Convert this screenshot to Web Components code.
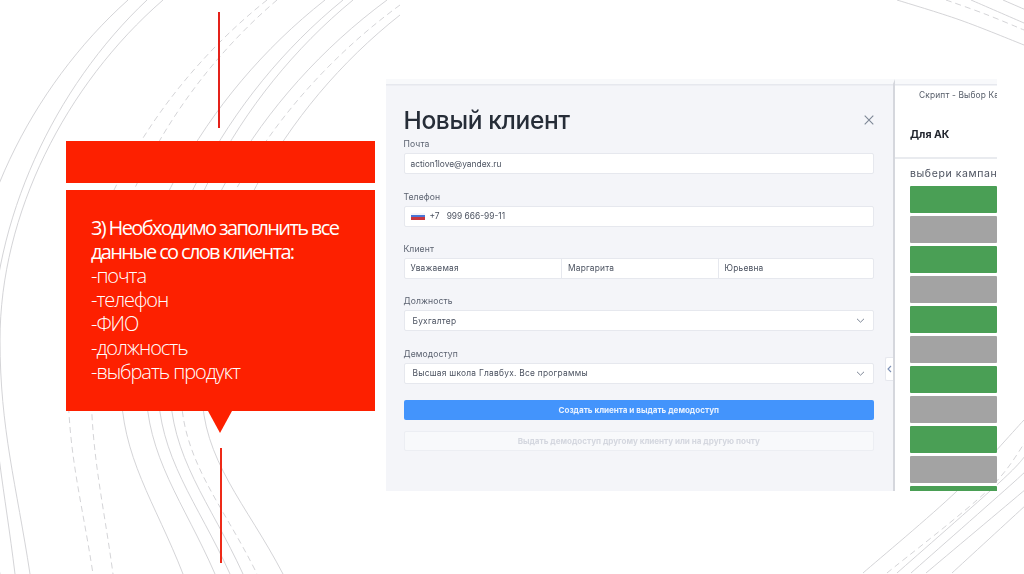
<!DOCTYPE html>
<html lang="ru"><head><meta charset="utf-8"><title>Новый клиент</title>
<style>
html,body{margin:0;padding:0;background:#fff}
</style></head><body>
<slide-page>
  <red-callout slot="left">
    <span class="h">3) Необходимо заполнить все</span>
    <span class="h">данные со слов клиента:</span>
    <span>-почта</span><span>-телефон</span><span>-ФИО</span><span>-должность</span><span>-выбрать продукт</span>
  </red-callout>
  <app-shot slot="right">
    <client-modal>
      <form-field label="Почта"><text-box>action1love@yandex.ru</text-box></form-field>
      <form-field label="Телефон"><text-box flag>+7&nbsp;&nbsp;&nbsp;999 666-99-11</text-box></form-field>
      <form-field label="Клиент"><name-box><span>Уважаемая</span><span>Маргарита</span><span>Юрьевна</span></name-box></form-field>
      <form-field label="Должность"><text-box select>Бухгалтер</text-box></form-field>
      <form-field label="Демодоступ"><text-box select>Высшая школа Главбух. Все программы</text-box></form-field>
    </client-modal>
    <script-panel></script-panel>
  </app-shot>
</slide-page>
<script>
function smooth(p){
  let d=`M${p[0][0]} ${p[0][1]}`;
  for(let i=0;i<p.length-1;i++){
    const a=p[Math.max(i-1,0)],b=p[i],c=p[i+1],e=p[Math.min(i+2,p.length-1)];
    d+=` C${(b[0]+(c[0]-a[0])/6).toFixed(1)} ${(b[1]+(c[1]-a[1])/6).toFixed(1)} ${(c[0]-(e[0]-b[0])/6).toFixed(1)} ${(c[1]-(e[1]-b[1])/6).toFixed(1)} ${c[0]} ${c[1]}`;
  }
  return d;
}
/* a left-hand arc: top end T, leftmost point L with a vertical tangent, bottom end B */
function arc(T,L,B){
  const dx=L[0]-T[0],dy=L[1]-T[1],by=B[1]-L[1],bx=B[0]-L[0];
  const n=v=>v.toFixed(1);
  return `M${T[0]} ${T[1]} C${n(T[0]+.6*dx)} ${n(T[1]+.25*dy)} ${L[0]} ${n(L[1]-.37*dy)} ${L[0]} ${L[1]} C${L[0]} ${n(L[1]+.38*by)} ${n(B[0]-.45*bx)} ${n(B[1]-.38*by)} ${B[0]} ${B[1]}`;
}
const LEFT_SOLID=[
 [[128,0],[-35,350],[0,574]],
 [[147,0],[-8,350],[15,574]],
 [[163,0],[0,340],[30,574]],
 [[325,0],[121,385],[183,574]],
 [[343,0],[146,385],[215,574]],
 [[353,0],[158,385],[230,574]],
 [[387,0],[170,385],[243,574]],
 [[400,15],[202,390],[283,574]]
];
const LEFT_DASH=[
 [[267,0],[68,380],[93,574]],
 [[277,0],[91,380],[113,574]],
 [[400,5],[181,390],[257,574]]
];
const RIGHT_SOLID=[
 [[897,0],[960,20],[1024,45]],
 [[971,0],[1024,23]],
 [[1003,0],[1026,10]],
 [[863,573],[957,491],[1024,420]],
 [[897,573],[1000,482],[1026,455]],
 [[911,573],[1014,482],[1026,470]],
 [[926,573],[1026,489]],
 [[952,573],[1026,505]]
];
const RIGHT_DASH=[
 [[946,0],[985,14],[1024,30]],
 [[887,573],[987,491],[1026,441]]
];
class Base extends HTMLElement{
  constructor(){super();this.attachShadow({mode:'open'}).innerHTML=this.tpl();}
}
customElements.define('slide-arcs',class extends Base{
  tpl(){return `<style>:host{display:block;position:absolute;inset:0}svg{display:block}path{fill:none;stroke:#cfcfd2;stroke-width:.9}</style>
  <svg width="1024" height="574" viewBox="0 0 1024 574">
  ${LEFT_SOLID.map(a=>`<path d="${arc(...a)}"/>`).join('')}
  ${LEFT_DASH.map(a=>`<path stroke-dasharray="6 4" d="${arc(...a)}"/>`).join('')}
  ${RIGHT_SOLID.map(p=>`<path d="${smooth(p)}"/>`).join('')}
  ${RIGHT_DASH.map(p=>`<path stroke-dasharray="6 4" d="${smooth(p)}"/>`).join('')}
  </svg>`}
});
customElements.define('slide-page',class extends Base{
  tpl(){return `<style>:host{display:flex;position:relative;width:1024px;height:574px;overflow:hidden;background:#fff}
  .col{position:relative;display:flex;gap:10.5px;padding-left:65.5px}</style>
  <slide-arcs></slide-arcs><div class="col"><slot name="left"></slot><slot name="right"></slot></div>`}
});
customElements.define('red-callout',class extends Base{
  tpl(){return `<style>
  :host{display:flex;flex-direction:column;width:310px;padding-top:12px;box-sizing:border-box}
  .v{width:2px;height:116px;background:#e4211a}
  .v.a{margin-left:152.5px}
  .v.b{margin-left:154px;margin-top:15px;height:115px;width:2.4px;background:#ee2a18}
  .bar{height:42px;width:309.5px;background:#fd2000;margin-top:13px}
  .box{height:221px;width:309px;margin-left:.5px;margin-top:7px;background:#fd2000;box-sizing:border-box;padding:25.5px 0 0 25px;
    display:flex;flex-direction:column;color:#fff;font:300 20px/24px "Open Sans",sans-serif;letter-spacing:-1.05px}
  ::slotted(span){white-space:nowrap}
  ::slotted(.h){letter-spacing:-1.65px;font-weight:400}
  .tip{width:0;height:0;margin-left:142px;border:12.5px solid transparent;border-bottom:0;border-top:22px solid #fd2000}
  </style>
  <div class="v a"></div><div class="bar"></div><div class="box"><slot></slot></div><div class="tip"></div><div class="v b"></div>`}
});
customElements.define('app-shot',class extends Base{
  tpl(){return `<style>
  :host{display:flex;width:611px;height:412px;margin-top:79px;background:#fff;position:relative;filter:blur(.3px);overflow:hidden;
    font-family:"Inter","Liberation Sans",sans-serif}
  </style><slot></slot>`}
});
customElements.define('client-modal',class extends Base{
  tpl(){return `<style>
  :host{display:flex;flex-direction:column;width:509px;height:412px;flex:none;box-sizing:border-box;position:relative;background:#f4f5f9;
    border-top:5px solid #f8f9fb;border-right:2px solid #d5d7dd;padding:0 19px 0 17.5px;box-shadow:inset 0 1.5px 0 #e6e8ee}
  .head{display:flex;justify-content:space-between;align-items:center;height:54px;padding-top:18.5px;box-sizing:border-box;color:#262d38;
    font:500 24.5px/30px "Inter","Liberation Sans",sans-serif;letter-spacing:-.35px}
  svg{display:block;margin-right:.5px}
  .fields{display:flex;flex-direction:column;gap:17.6px;margin-top:1px}
  button{display:block;width:100%;box-sizing:border-box;height:20.5px;border-radius:2px;border:0;padding:0;font:700 8.1px "Inter","Liberation Sans",sans-serif;letter-spacing:-.03px}
  .go{background:#4394fc;color:#e9f2ff;margin-top:16px}
  .alt{background:#f8f9fb;color:#d4d7df;margin-top:10.5px;border:1px solid #eceef3}
  .handle{position:absolute;left:498.5px;top:273px;width:8.5px;height:24px;box-sizing:border-box;background:#fff;border:1px solid #e6e8ee;border-right:0;border-radius:2px 0 0 2px;display:flex;align-items:center;justify-content:center}
  </style>
  <div class="head"><span>Новый клиент</span>
  <svg width="10" height="10" viewBox="0 0 10 10"><path d="M.7.7l8.6 8.6M9.3.7L.7 9.3" stroke="#7d8796" stroke-width="1.1" fill="none"/></svg></div>
  <div class="fields"><slot></slot></div>
  <button class="go">Создать клиента и выдать демодоступ</button>
  <button class="alt">Выдать демодоступ другому клиенту или на другую почту</button>
  <div class="handle"><svg width="5" height="8" viewBox="0 0 5 8" style="margin:0"><path d="M4 1L1 4l3 3" stroke="#7b8fb5" stroke-width="1.1" fill="none"/></svg></div>`}
});
customElements.define('form-field',class extends Base{
  tpl(){return `<style>:host{display:flex;flex-direction:column;gap:3px;color:#5b6270;font:400 8.6px/11px "Inter","Liberation Sans",sans-serif;letter-spacing:.1px}
  </style><span>${this.getAttribute('label')}</span><slot></slot>`}
});
customElements.define('text-box',class extends Base{
  tpl(){const sel=this.hasAttribute('select'),fl=this.hasAttribute('flag');
  return `<style>:host{display:flex;align-items:center;height:21px;box-sizing:border-box;background:#fff;border:1px solid #e6e8ee;border-radius:2px;
    padding:0 8px 0 ${sel?8:6}px;gap:5px;color:#4b5260;font:400 8.4px "Inter","Liberation Sans",sans-serif;letter-spacing:${sel?.25:0}px;white-space:nowrap}
  .t{flex:1}
  .flag{width:14px;height:7px;background:linear-gradient(#f4f5f9 33%,#4a76d6 33%,#4a76d6 60%,#c9373f 60%)}
  </style>${fl?'<i class="flag"></i>':''}<span class="t"><slot></slot></span>
  ${sel?'<svg width="9" height="5" viewBox="0 0 9 5"><path d="M1 .8l3.5 3.4L8 .8" stroke="#7d8796" stroke-width="1" fill="none"/></svg>':''}`}
});
customElements.define('name-box',class extends Base{
  tpl(){return `<style>:host{display:grid;grid-template-columns:156.5px 156.5px 1fr;height:20.5px;box-sizing:border-box;background:#fff;border:1px solid #e6e8ee;border-radius:2px;
    color:#4b5260;font:400 8.4px/18.5px "Inter","Liberation Sans",sans-serif;letter-spacing:.2px}
  ::slotted(span){padding-left:6px;border-left:1px solid #e6e8ee}
  ::slotted(span:first-child){border-left:0}</style><slot></slot>`}
});
customElements.define('script-panel',class extends Base{
  tpl(){const bars=Array.from({length:11},(_,i)=>`<div class="b" style="background:${i%2?'#a3a3a3':'#4a9f55'}"></div>`).join('');
  return `<style>:host{display:block;width:102px;flex:none;height:412px;overflow:hidden;background:#fff;border-top:5px solid #f8f9fb;box-sizing:border-box;box-shadow:inset 0 1.5px 0 #e6e8ee;color:#3a3f4a;font-family:"Inter","Liberation Sans",sans-serif;white-space:nowrap}
  .s{font-size:8.4px;line-height:11px;padding:6px 0 0 24px;color:#555c68;letter-spacing:.15px}
  .t{font-size:10.5px;font-weight:700;line-height:14px;padding:27px 0 0 15px;color:#22262e;height:29px}
  .hr{height:1.5px;background:#e9ebef}
  .q{font-size:10.5px;line-height:14px;padding:8px 0 0 15px;color:#4d5360;letter-spacing:.6px;height:19.7px}
  .bars{display:flex;flex-direction:column;gap:3px;margin:0 0 0 15px;width:87px}
  .b{height:27px;border-radius:1px;flex:none}
  </style><div class="s">Скрипт - Выбор Кампании</div><div class="t">Для АК</div><div class="hr"></div><div class="q">выбери кампанию</div><div class="bars">${bars}</div>`}
});
</script>
</body></html>
